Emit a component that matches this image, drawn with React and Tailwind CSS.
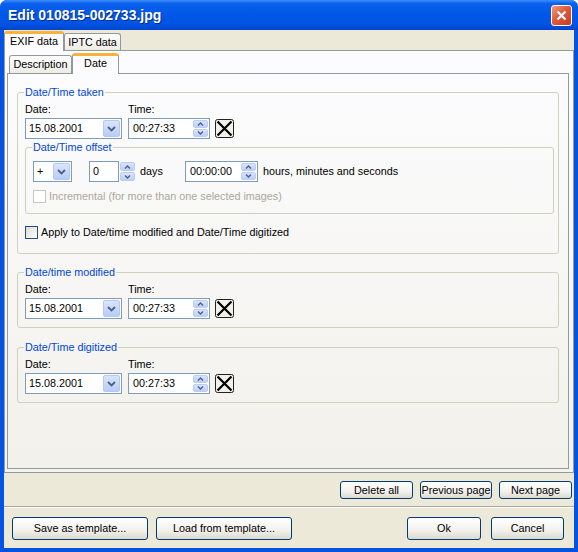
import React from "react";

const Chevron = () => (
  <svg width="9" height="6" viewBox="0 0 9 6">
    <path d="M1 1 L4.5 4.5 L8 1" fill="none" stroke="#4D6185" strokeWidth="1.8" />
  </svg>
);

const Arrow = ({ up }) => (
  <svg width="7" height="4" viewBox="0 0 7 4">
    <path d={up ? "M1 3.5 L3.5 1 L6 3.5" : "M1 0.5 L3.5 3 L6 0.5"} fill="none" stroke="#4D6185" strokeWidth="1.4" />
  </svg>
);

const Spin = () => (
  <span className="flex h-full w-[15px] flex-col gap-[1px] py-[1px]">
    <span className="flex flex-1 items-center justify-center rounded-[2px] border border-[#BCCCF2] bg-[linear-gradient(to_bottom,#D9E4FD,#BDCFF8)]">
      <Arrow up />
    </span>
    <span className="flex flex-1 items-center justify-center rounded-[2px] border border-[#BCCCF2] bg-[linear-gradient(to_bottom,#D9E4FD,#BDCFF8)]">
      <Arrow />
    </span>
  </span>
);

const Combo = ({ value, w }) => (
  <div className={`flex h-[21px] shrink-0 border border-[#7F9DB9] bg-white ${w}`}>
    <span className="flex-1 pl-[3px] leading-[19px]">{value}</span>
    <span className="m-[1px] flex w-[17px] items-center justify-center rounded-[2px] border border-[#B5C8F3] bg-[linear-gradient(to_bottom,#DAE5FD,#B8CCF6)]">
      <Chevron />
    </span>
  </div>
);

const TimeBox = ({ value, w }) => (
  <div className={`flex h-[21px] shrink-0 border border-[#7F9DB9] bg-white pr-[1px] ${w}`}>
    <span className="flex-1 pl-[4px] leading-[19px]">{value}</span>
    <Spin />
  </div>
);

const ClearBtn = () => (
  <svg width="19" height="19" viewBox="0 0 19 19" className="ml-[5px] shrink-0">
    <rect x="0.5" y="0.5" width="18" height="18" rx="2" fill="#F1F0EA" stroke="#222" />
    <path d="M2.5 2.5 L16.5 16.5 M16.5 2.5 L2.5 16.5" stroke="#000" strokeWidth="2.2" />
  </svg>
);

const Check = ({ disabled, label }) => (
  <div className="flex h-[13px] items-center">
    <span
      className={
        disabled
          ? "h-[13px] w-[13px] border border-[#CAC8BB] bg-white"
          : "h-[13px] w-[13px] border border-[#1C5180] bg-[linear-gradient(135deg,#DCDBD5,#FFFFFF)]"
      }
    />
    <span className={disabled ? "ml-[3px] text-[#ACA899]" : "ml-[3px]"}>{label}</span>
  </div>
);

const Group = ({ title, className, children }) => (
  <fieldset className={`rounded-[3px] border border-[#D0D0BF] ${className}`}>
    <legend className="ml-[-1px] px-[1px] leading-[13px] text-[#0046D5]">{title}</legend>
    {children}
  </fieldset>
);

const DateTimeRow = () => (
  <>
    <div className="mt-[4px] flex h-[13px] leading-[13px]">
      <span className="w-[103px]">Date:</span>
      <span>Time:</span>
    </div>
    <div className="mt-[2px] flex items-center">
      <Combo value="15.08.2001" w="w-[97px]" />
      <span className="ml-[6px]">
        <TimeBox value="00:27:33" w="w-[82px]" />
      </span>
      <ClearBtn />
    </div>
  </>
);

const XpButton = ({ children, w, h = "h-[18px]" }) => (
  <button className={`${w} ${h} shrink-0 rounded-[3px] border border-[#003C74] bg-[linear-gradient(to_bottom,#FFFFFF,#F2F1EC_60%,#DDD9CE)] text-[10.8px] leading-none text-black`}>
    {children}
  </button>
);

export default function App() {
  return (
    <div className="flex h-[552px] w-[578px] flex-col overflow-hidden rounded-t-[7px] bg-[#0553E1] font-['Liberation_Sans',Arial,sans-serif] text-[10.8px] leading-[13px] text-black">
      {/* title bar */}
      <div className="flex h-[30px] shrink-0 items-center pl-[8px] pr-[6px] bg-[linear-gradient(to_bottom,#3C8EFB_0%,#0A60EC_12%,#0057E7_50%,#0054E3_80%,#0043CC_100%)]">
        <span className="flex-1 text-[14px] font-bold leading-[16px] text-white [text-shadow:1px_1px_#0A2A8F]">
          Edit 010815-002733.jpg
        </span>
        <span className="flex h-[21px] w-[21px] items-center justify-center rounded-[3px] border border-white bg-[linear-gradient(135deg,#F09A80,#E05A3C_45%,#C63A1C)]">
          <svg width="11" height="11" viewBox="0 0 11 11">
            <path d="M1.5 1.5 L9.5 9.5 M9.5 1.5 L1.5 9.5" stroke="#fff" strokeWidth="2.2" />
          </svg>
        </span>
      </div>

      {/* body */}
      <div className="mx-[4px] mb-[4px] flex flex-1 flex-col bg-[#ECE9D8]">
        {/* outer tabs */}
        <div className="flex h-[20px] items-end">
          <div className="relative z-10 -mb-[1px] flex h-[20px] w-[60px] items-center justify-center rounded-t-[3px] border-x border-t-[3px] border-x-[#919B9C] border-t-[#F6B43C] bg-[#FCFCFE] pb-[2px]">
            EXIF data
          </div>
          <div className="flex h-[17px] w-[57px] items-center justify-center rounded-t-[3px] border-x border-t border-[#919B9C] bg-[linear-gradient(to_bottom,#FFFFFF,#ECEBE5)]">
            IPTC data
          </div>
        </div>

        {/* outer panel */}
        <div className="flex h-[423px] flex-col border border-[#919B9C] bg-[linear-gradient(to_bottom,#FCFCFE,#F4F3EE)]">
          <div className="ml-[4px] flex h-[22px] items-end">
            <div className="flex h-[18px] w-[63px] items-center justify-center rounded-t-[3px] border-x border-t border-[#919B9C] bg-[linear-gradient(to_bottom,#FFFFFF,#ECEBE5)]">
              Description
            </div>
            <div className="relative z-10 -mb-[1px] flex h-[21px] w-[47px] items-center justify-center rounded-t-[3px] border-x border-t-[3px] border-x-[#919B9C] border-t-[#F6B43C] bg-[#FCFCFE] pb-[3px]">
              Date
            </div>
          </div>

          {/* inner panel */}
          <div className="ml-[2px] mr-[4px] flex h-[396px] flex-col border border-[#919B9C] bg-[linear-gradient(to_bottom,#FCFCFE,#F2F1EB)]">
            <Group title="Date/Time taken" className="ml-[9px] mt-[12px] w-[542px] pb-[14px] pl-[7px]">
              <DateTimeRow />
              <Group title="Date/Time offset" className="mt-[2px] w-[529px] pb-[10px] pl-[7px]">
                <div className="mt-[7px] flex h-[21px] items-center">
                  <Combo value="+" w="w-[39px]" />
                  <div className="ml-[17px] flex h-[21px] shrink-0">
                    <span className="h-[21px] w-[30px] border border-[#7F9DB9] bg-white pl-[3px] leading-[19px]">0</span>
                    <span className="ml-[1px] h-[21px]">
                      <Spin />
                    </span>
                  </div>
                  <span className="ml-[5px] w-[45px]">days</span>
                  <TimeBox value="00:00:00" w="w-[73px]" />
                  <span className="ml-[5px]">hours, minutes and seconds</span>
                </div>
                <div className="mt-[8px]">
                  <Check disabled label="Incremental (for more than one selected images)" />
                </div>
              </Group>
              <div className="mt-[12px]">
                <Check label="Apply to Date/time modified and Date/Time digitized" />
              </div>
            </Group>

            <Group title="Date/time modified" className="ml-[9px] mt-[12px] w-[542px] pb-[8px] pl-[7px]">
              <DateTimeRow />
            </Group>

            <Group title="Date/Time digitized" className="ml-[9px] mt-[13px] w-[542px] pb-[8px] pl-[7px]">
              <DateTimeRow />
            </Group>
          </div>
        </div>

        {/* page buttons */}
        <div className="mt-[8px] flex justify-end gap-[7px] pr-[2px]">
          <XpButton w="w-[73px]">Delete all</XpButton>
          <XpButton w="w-[72px]">Previous page</XpButton>
          <XpButton w="w-[73px]">Next page</XpButton>
        </div>

        <div className="mt-[7px] h-[2px] border-t border-b border-t-[#ACA899] border-b-white" />

        <div className="mt-[9px] flex pl-[8px] pr-[10px]">
          <XpButton w="w-[136px]" h="h-[23px]">Save as template...</XpButton>
          <span className="ml-[8px]">
            <XpButton w="w-[136px]" h="h-[23px]">Load from template...</XpButton>
          </span>
          <span className="flex-1" />
          <XpButton w="w-[74px]" h="h-[23px]">Ok</XpButton>
          <span className="ml-[10px]">
            <XpButton w="w-[73px]" h="h-[23px]">Cancel</XpButton>
          </span>
        </div>
      </div>
    </div>
  );
}
